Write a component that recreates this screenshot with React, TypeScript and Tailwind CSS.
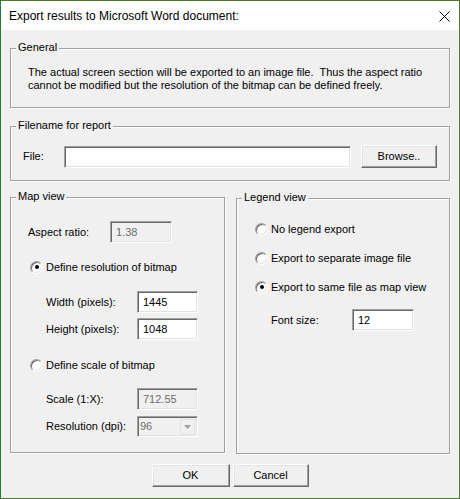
import React from "react";

const sunken =
  "border border-t-[#a0a0a0] border-l-[#a0a0a0] border-b-white border-r-white shadow-[inset_1px_1px_0_#696969,inset_-1px_-1px_0_#e3e3e3]";
const raised =
  "border border-t-white border-l-white border-b-[#696969] border-r-[#696969] shadow-[inset_-1px_-1px_0_#a0a0a0,inset_1px_1px_0_#e3e3e3] bg-[#f0f0f0]";

function Group({
  label,
  className,
  children,
}: {
  label: string;
  className: string;
  children?: React.ReactNode;
}) {
  return (
    <div
      className={`relative border border-[#a0a0a0] shadow-[1px_1px_0_#fff,inset_1px_1px_0_#fff] ${className}`}
    >
      <span className="absolute left-[5px] top-[-8px] bg-[#f0f0f0] px-[2px] leading-[13px]">
        {label}
      </span>
      {children}
    </div>
  );
}

function Edit({
  value = "",
  w,
  disabled,
}: {
  value?: string;
  w: string;
  disabled?: boolean;
}) {
  return (
    <div
      className={`flex h-[22px] items-center pl-[5px] ${sunken} ${w} ${
        disabled ? "bg-[#f0f0f0] text-[#6d6d6d]" : "bg-white text-black"
      }`}
    >
      {value}
    </div>
  );
}

function Radio({ checked, label }: { checked?: boolean; label: string }) {
  return (
    <div className="flex h-[16px] items-center gap-[3px]">
      <span
        className={`flex h-[13px] w-[13px] items-center justify-center rounded-full ${sunken} bg-white`}
      >
        {checked && <span className="h-[4px] w-[4px] rounded-full bg-black" />}
      </span>
      <span>{label}</span>
    </div>
  );
}

function Button({ label, w }: { label: string; w: string }) {
  return (
    <div className={`flex h-[23px] items-center justify-center ${raised} ${w}`}>
      {label}
    </div>
  );
}

export default function App() {
  return (
    <div className="flex h-[499px] w-[460px] flex-col border border-[#4f7a2a] border-l-[#2a7a3a] bg-[#f0f0f0] font-['Liberation_Sans',Tahoma,Arial,sans-serif] text-[11px] text-black">
      <div className="flex h-[29px] items-center justify-between bg-white pl-[8px] pr-[9px] font-['Liberation_Sans',Arial,sans-serif] text-[12px]">
        <span>Export results to Microsoft Word document:</span>
        <svg width="11" height="11" viewBox="0 0 11 11" className="mt-[1px]">
          <path d="M0.5 0.5 L10.5 10.5 M10.5 0.5 L0.5 10.5" stroke="#000" strokeWidth="1" />
        </svg>
      </div>

      <div className="flex flex-1 flex-col px-[9px] pt-[18px]">
        <Group label="General" className="h-[60px] pl-[17px] pt-[17px] leading-[13px]">
          <p>
            The actual screen section will be exported to an image file.&nbsp; Thus the aspect ratio
          </p>
          <p>cannot be modified but the resolution of the bitmap can be defined freely.</p>
        </Group>

        <Group label="Filename for report" className="mt-[18px] h-[55px] pl-[12px] pt-[18px]">
          <div className="flex h-[23px] items-center">
            <span className="w-[41px]">File:</span>
            <Edit w="w-[287px]" />
            <div className="ml-[10px]">
              <Button label="Browse.." w="w-[76px]" />
            </div>
          </div>
        </Group>

        <div className="mt-[16px] flex gap-[11px]">
          <Group label="Map view" className="flex h-[256px] w-[215px] flex-col pl-[17px]">
            <div className="mt-[23px] flex items-center">
              <span className="w-[82px]">Aspect ratio:</span>
              <Edit value="1.38" w="w-[62px]" disabled />
            </div>
            <div className="mt-[16px] pl-[2px]">
              <Radio checked label="Define resolution of bitmap" />
            </div>
            <div className="mt-[16px] flex items-center pl-[18px]">
              <span className="w-[91px]">Width (pixels):</span>
              <Edit value="1445" w="w-[61px]" />
            </div>
            <div className="mt-[5px] flex items-center pl-[18px]">
              <span className="w-[91px]">Height (pixels):</span>
              <Edit value="1048" w="w-[61px]" />
            </div>
            <div className="mt-[17px] pl-[2px]">
              <Radio label="Define scale of bitmap" />
            </div>
            <div className="mt-[15px] flex items-center pl-[18px]">
              <span className="w-[91px]">Scale (1:X):</span>
              <Edit value="712.55" w="w-[61px]" disabled />
            </div>
            <div className="mt-[6px] flex items-center pl-[18px]">
              <span className="w-[91px]">Resolution (dpi):</span>
              <div
                className={`flex h-[21px] w-[61px] items-center justify-between bg-[#f0f0f0] pl-[2px] pr-[2px] text-[#6d6d6d] ${sunken}`}
              >
                <span>96</span>
                <span className="flex h-[16px] w-[15px] items-center justify-center border border-[#e3e3e3] bg-[#f0f0f0]">
                  <svg width="7" height="4" viewBox="0 0 7 4">
                    <path d="M0 0 H7 L3.5 4 Z" fill="#a0a0a0" />
                  </svg>
                </span>
              </div>
            </div>
          </Group>

          <Group label="Legend view" className="mt-[1px] flex h-[256px] w-[214px] flex-col pl-[18px]">
            <div className="mt-[22px]">
              <Radio label="No legend export" />
            </div>
            <div className="mt-[13px]">
              <Radio label="Export to separate image file" />
            </div>
            <div className="mt-[13px]">
              <Radio checked label="Export to same file as map view" />
            </div>
            <div className="mt-[14px] flex items-center pl-[16px]">
              <span className="w-[81px]">Font size:</span>
              <Edit value="12" w="w-[62px]" />
            </div>
          </Group>
        </div>

        <div className="mt-[10px] flex justify-center gap-[3px]">
          <Button label="OK" w="w-[78px]" />
          <Button label="Cancel" w="w-[76px]" />
        </div>
      </div>
    </div>
  );
}
